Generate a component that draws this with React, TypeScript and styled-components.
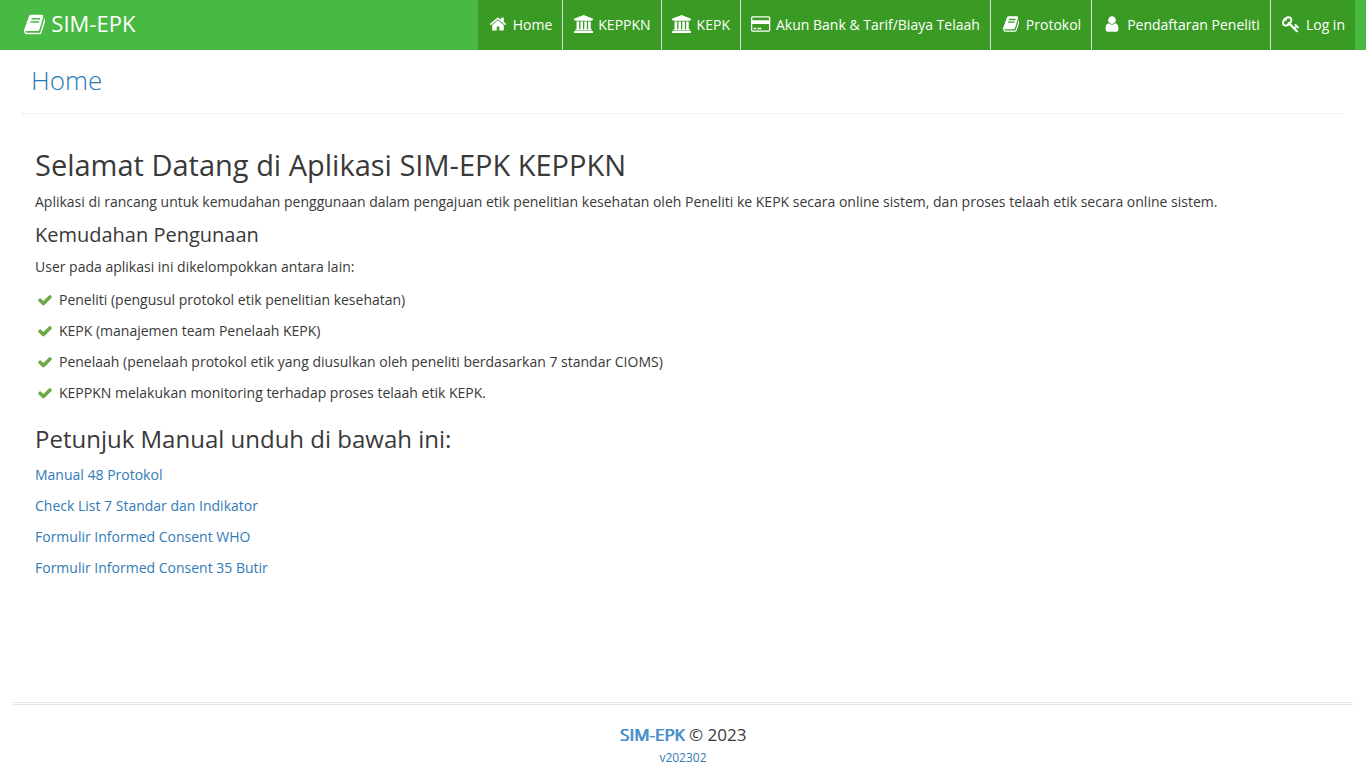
import React from "react";
import styled, { createGlobalStyle } from "styled-components";

const GlobalStyle = createGlobalStyle`
  *, *::before, *::after { box-sizing: border-box; }
  body {
    margin: 0;
    background: #fff;
    color: #393939;
    font-family: "Open Sans", sans-serif;
    font-size: 14px;
    line-height: 21px;
  }
  a { color: #337ab7; text-decoration: none; }
`;

const glyphs = {
  book: {
    w: 1664,
    d: "M1639 478q40 57 18 129l-275 906q-19 64-76.5 107.5t-122.5 43.5h-923q-77 0-148.5-53.5t-99.5-131.5q-24-67-2-127 0-4 3-27t4-37q1-8-3-21.5t-3-19.5q2-11 8-21t16.5-23.5 16.5-23.5q23-38 45-91.5t30-91.5q3-10 .5-30t-.5-28q3-11 17-28t17-23q21-36 42-92t25-90q1-9-2.5-32t.5-28q4-13 22-30.5t22-22.5q19-26 42.5-84.5t27.5-96.5q1-8-3-25.5t-2-26.5q2-8 9-18t18-23 17-21q8-12 16.5-30.5t15-35 16-36 19.5-32 26.5-23.5 36-11.5 47.5 5.5l-1 3q38-9 51-9h761q74 0 114 56t18 130l-274 906q-36 119-71.5 153.5t-128.5 34.5h-869q-27 0-38 15-11 16-1 43 24 70 144 70h923q29 0 56-15.5t35-41.5l300-987q7-22 5-57 38 15 59 43zm-1064 2q-4 13 2 22.5t20 9.5h608q13 0 25.5-9.5t16.5-22.5l21-64q4-13-2-22.5t-20-9.5h-608q-13 0-25.5 9.5t-16.5 22.5zm-83 256q-4 13 2 22.5t20 9.5h608q13 0 25.5-9.5t16.5-22.5l21-64q4-13-2-22.5t-20-9.5h-608q-13 0-25.5 9.5t-16.5 22.5z",
  },
  home: {
    w: 1792,
    d: "M1472 992v480q0 26-19 45t-45 19h-384v-384h-256v384h-384q-26 0-45-19t-19-45v-480q0-1 .5-3t.5-3l575-474 575 474q1 2 1 6zm223-69l-62 74q-8 9-21 11h-3q-13 0-21-7l-692-577-692 577q-12 8-24 7-13-2-21-11l-62-74q-8-10-7-23.5t11-21.5l719-599q32-26 76-26t76 26l244 204v-195q0-14 9-23t23-9h192q14 0 23 9t9 23v408l219 182q10 8 11 21.5t-7 23.5z",
  },
  university: {
    w: 1920,
    d: "M960 0l960 384v128h-128q0 26-20.5 45t-48.5 19h-1526q-28 0-48.5-19t-20.5-45h-128v-128zm-704 640h256v768h128v-768h256v768h128v-768h256v768h128v-768h256v768h59q28 0 48.5 19t20.5 45v64h-1664v-64q0-26 20.5-45t48.5-19h59v-768zm1595 960q28 0 48.5 19t20.5 45v128h-1920v-128q0-26 20.5-45t48.5-19h1782z",
  },
  card: {
    w: 1920,
    d: "M1760 128q66 0 113 47t47 113v1216q0 66-47 113t-113 47h-1600q-66 0-113-47t-47-113v-1216q0-66 47-113t113-47h1600zm-1600 128q-13 0-22.5 9.5t-9.5 22.5v224h1664v-224q0-13-9.5-22.5t-22.5-9.5h-1600zm1600 1280q13 0 22.5-9.5t9.5-22.5v-608h-1664v608q0 13 9.5 22.5t22.5 9.5h1600zm-1504-128v-128h256v128h-256zm384 0v-128h384v128h-384z",
  },
  user: {
    w: 1792,
    d: "M1536 1399q0 109-62.5 187t-150.5 78h-854q-88 0-150.5-78t-62.5-187q0-85 8.5-160.5t31.5-152 58.5-131 94-89 134.5-34.5q131 128 313 128t313-128q76 0 134.5 34.5t94 89 58.5 131 31.5 152 8.5 160.5zm-256-887q0 159-112.5 271.5t-271.5 112.5-271.5-112.5-112.5-271.5 112.5-271.5 271.5-112.5 271.5 112.5 112.5 271.5z",
  },
  key: {
    w: 1792,
    d: "M832 512q0-80-56-136t-136-56-136 56-56 136q0 42 19 83-41-19-83-19-80 0-136 56t-56 136 56 136 136 56 136-56 56-136q0-42-19-83 41 19 83 19 80 0 136-56t56-136zm851 704q0 17-49 66t-66 49q-9 0-28.5-16t-36.5-33-38.5-40-24.5-26l-96 96 220 220q28 28 28 68 0 42-39 81t-81 39q-40 0-68-28l-671-671q-176 131-365 131-163 0-265.5-102.5t-102.5-265.5q0-160 95-313t248-248 313-95q163 0 265.5 102.5t102.5 265.5q0 189-131 365l355 355 96-96q-3-3-26-24.5t-40-38.5-33-36.5-16-28.5q0-17 49-66t66-49q13 0 23 10 6 6 46 44.5t82 79.5 86.5 86 73 78 28.5 41z",
  },
  check: {
    w: 1792,
    d: "M1671 566q0 40-28 68l-724 724-136 136q-28 28-68 28t-68-28l-136-136-362-362q-28-28-28-68t28-68l136-136q28-28 68-28t68 28l294 295 656-657q28-28 68-28t68 28l136 136q28 28 28 68z",
  },
};

type GlyphName = keyof typeof glyphs;

const Glyph = styled.svg<{ $size: number }>`
  display: block;
  flex: none;
  height: ${(p) => p.$size}px;
  fill: currentColor;
`;

function Icon({ name, size }: { name: GlyphName; size: number }) {
  const g = glyphs[name];
  return (
    <Glyph $size={size} viewBox={`0 0 ${g.w} 1792`} aria-hidden="true">
      <path d={g.d} />
    </Glyph>
  );
}

const Page = styled.div`
  display: flex;
  flex-direction: column;
  min-height: 100vh;
`;

const Navbar = styled.header`
  display: flex;
  justify-content: space-between;
  min-height: 50px;
  padding: 0 11px 0 24px;
  background: #48b943;
`;

const Brand = styled.a`
  display: flex;
  align-items: center;
  gap: 6px;
  height: 48px;
  color: #fff;
  font-size: 22px;
  line-height: 30px;
  white-space: nowrap;
`;

const BrandName = styled.span`
  padding-bottom: 2px;
`;

const NavList = styled.ul`
  display: flex;
  margin: 0;
  padding: 0;
  list-style: none;
`;

const NavItem = styled.li`
  & + & { border-left: 1px solid #ddd; }
`;

const NavLink = styled.a`
  display: flex;
  align-items: center;
  gap: 5px;
  height: 50px;
  padding: 0 10px 2px;
  background: #3a9b24;
  color: #fff;
  white-space: nowrap;
`;

const NavIcon = styled.span`
  display: flex;
  justify-content: center;
  width: 20px;
`;

const Main = styled.main`
  flex: 1;
  padding: 0 22px;
`;

const PageHeader = styled.div`
  padding: 13px 9px 16px;
  border-bottom: 1px dotted #e2e2e2;
`;

const PageTitle = styled.h1`
  margin: 0;
  color: #2679b5;
  font-size: 26px;
  font-weight: 300;
  line-height: 34px;
`;

const Content = styled.div`
  padding: 33px 13px;
`;

const Heading = styled.h2<{ $size: number; $line: number }>`
  margin: 0 0 9px;
  font-size: ${(p) => p.$size}px;
  font-weight: 400;
  line-height: ${(p) => p.$line}px;
`;

const Text = styled.p`
  margin: 0 0 11px;
`;

const Rows = styled.ul`
  display: flex;
  flex-direction: column;
  gap: 10px;
  margin: 0 0 20px;
  padding: 1px 0 0;
  list-style: none;
`;

const Row = styled.li`
  display: flex;
  align-items: center;
  gap: 4px;
`;

const Tick = styled.span`
  display: flex;
  justify-content: center;
  width: 20px;
  color: #69aa46;
`;

const Footer = styled.footer`
  margin: 0 13px;
  padding: 16px 0 0;
  border-top: 3px double #e5e5e5;
  text-align: center;
`;

const Copyright = styled.p`
  margin: 0;
  font-size: 17px;
  line-height: 27px;
`;

const Product = styled.span`
  color: #478fca;
  text-shadow: 1px 0 #478fca;
`;

const Version = styled.a`
  display: block;
  font-size: 12px;
  line-height: 20px;
`;

const navItems: { icon: GlyphName; label: string }[] = [
  { icon: "home", label: "Home" },
  { icon: "university", label: "KEPPKN" },
  { icon: "university", label: "KEPK" },
  { icon: "card", label: "Akun Bank & Tarif/Biaya Telaah" },
  { icon: "book", label: "Protokol" },
  { icon: "user", label: "Pendaftaran Peneliti" },
  { icon: "key", label: "Log in" },
];

const roles = [
  "Peneliti (pengusul protokol etik penelitian kesehatan)",
  "KEPK (manajemen team Penelaah KEPK)",
  "Penelaah (penelaah protokol etik yang diusulkan oleh peneliti berdasarkan 7 standar CIOMS)",
  "KEPPKN melakukan monitoring terhadap proses telaah etik KEPK.",
];

const manuals = [
  "Manual 48 Protokol",
  "Check List 7 Standar dan Indikator",
  "Formulir Informed Consent WHO",
  "Formulir Informed Consent 35 Butir",
];

export default function App() {
  return (
    <Page>
      <GlobalStyle />
      <Navbar>
        <Brand href="#">
          <Icon name="book" size={23} />
          <BrandName>SIM-EPK</BrandName>
        </Brand>
        <nav>
          <NavList>
            {navItems.map((item) => (
              <NavItem key={item.label}>
                <NavLink href="#">
                  <NavIcon>
                    <Icon name={item.icon} size={18} />
                  </NavIcon>
                  {item.label}
                </NavLink>
              </NavItem>
            ))}
          </NavList>
        </nav>
      </Navbar>
      <Main>
        <PageHeader>
          <PageTitle>Home</PageTitle>
        </PageHeader>
        <Content>
          <Heading $size={29} $line={35}>Selamat Datang di Aplikasi SIM-EPK KEPPKN</Heading>
          <Text>
            Aplikasi di rancang untuk kemudahan penggunaan dalam pengajuan etik penelitian kesehatan oleh Peneliti ke
            KEPK secara online sistem, dan proses telaah etik secara online sistem.
          </Text>
          <Heading as="h3" $size={20} $line={24}>Kemudahan Pengunaan</Heading>
          <Text>User pada aplikasi ini dikelompokkan antara lain:</Text>
          <Rows>
            {roles.map((role) => (
              <Row key={role}>
                <Tick>
                  <Icon name="check" size={16} />
                </Tick>
                {role}
              </Row>
            ))}
          </Rows>
          <Heading as="h3" $size={24} $line={31}>Petunjuk Manual unduh di bawah ini:</Heading>
          <Rows>
            {manuals.map((manual) => (
              <Row key={manual}>
                <a href="#">{manual}</a>
              </Row>
            ))}
          </Rows>
        </Content>
      </Main>
      <Footer>
        <Copyright>
          <Product>SIM-EPK</Product> © 2023
        </Copyright>
        <Version href="#">v202302</Version>
      </Footer>
    </Page>
  );
}
